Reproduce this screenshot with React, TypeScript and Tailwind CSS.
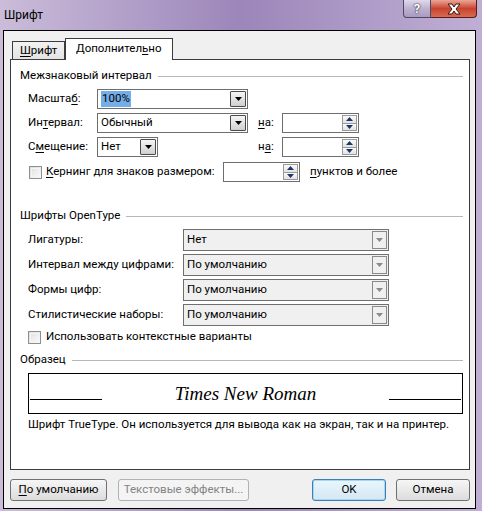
import React from "react";

// --- Small pieces ---

function U({ children }: { children: React.ReactNode }) {
  return <span className="underline underline-offset-[2px]">{children}</span>;
}

function DownArrow({ color = "#000" }: { color?: string }) {
  return (
    <svg width="7" height="4" viewBox="0 0 7 4">
      <polygon points="0,0 7,0 3.5,4" fill={color} />
    </svg>
  );
}

function UpArrow({ color = "#000" }: { color?: string }) {
  return (
    <svg width="7" height="4" viewBox="0 0 7 4">
      <polygon points="0,4 7,4 3.5,0" fill={color} />
    </svg>
  );
}

function EditCombo({
  className,
  children,
}: {
  className: string;
  children: React.ReactNode;
}) {
  return (
    <div className={`flex border border-[#6e6e6e] bg-white ${className}`}>
      <div className="flex flex-1 items-center pl-[3px]">{children}</div>
      <div className="m-px flex w-[16px] items-center justify-center rounded-[1px] border border-[#4a4a4a] bg-linear-to-b from-[#f6f6f6] to-[#cfcfcf]">
        <DownArrow />
      </div>
    </div>
  );
}

function Spin() {
  return (
    <div className="flex h-[20px] w-[77px] border border-[#6e6e6e] bg-white">
      <div className="flex-1" />
      <div className="m-px flex w-[15px] flex-col">
        <div className="flex flex-1 items-center justify-center border border-[#9a9a9a] bg-linear-to-b from-[#fbfbfb] to-[#e2e2e2]">
          <UpArrow color="#1d3566" />
        </div>
        <div className="flex flex-1 items-center justify-center border border-t-0 border-[#9a9a9a] bg-linear-to-b from-[#fbfbfb] to-[#e2e2e2]">
          <DownArrow color="#1d3566" />
        </div>
      </div>
    </div>
  );
}

function RoCombo({ children }: { children: React.ReactNode }) {
  return (
    <div className="flex h-[22px] w-[206px] border border-[#6f6f6f] bg-[#f0f0f0]">
      <div className="flex flex-1 items-center pl-[3px]">{children}</div>
      <div className="my-px mr-px flex w-[15px] items-center justify-center border border-[#8a8a8a] bg-[#f0f0f0]">
        <DownArrow color="#8a8a8a" />
      </div>
    </div>
  );
}

function CheckBox() {
  return (
    <div className="h-[13px] w-[13px] shrink-0 border border-[#8e8f8f] bg-linear-to-br from-[#dcdcdc] to-[#fafafa] p-px">
      <div className="h-full w-full border border-[#f4f4f4] bg-linear-to-br from-[#e4e4e4] to-[#f7f7f7]" />
    </div>
  );
}

function SectionHeader({ title }: { title: string }) {
  return (
    <div className="flex h-[16px] items-center">
      <span className="whitespace-nowrap">{title}</span>
      <div className="ml-[6px] h-px flex-1 bg-[#b4b8bd]" />
    </div>
  );
}

function Button({
  className,
  children,
}: {
  className: string;
  children: React.ReactNode;
}) {
  return (
    <div
      className={`flex h-[22px] items-center justify-center whitespace-nowrap rounded-[3px] border ${className}`}
    >
      {children}
    </div>
  );
}

// --- Dialog ---

export default function App() {
  return (
    <div className="flex h-[511px] w-[482px] flex-col bg-linear-to-r from-[#cbbcd9] via-[#9c86ba] to-[#c0afd4] font-['Roboto',sans-serif] text-[11.5px] leading-none text-black">
      {/* Title bar */}
      <div className="flex h-[30px] justify-between">
        <div className="self-center pl-[4px] pb-[1px] text-[12px]">Шрифт</div>
        <div className="mr-[5px] flex h-[18px]">
          <div className="flex w-[28px] items-center justify-center rounded-bl-[4px] border border-t-0 border-[#4d4866] bg-linear-to-b from-[#e0daea] via-[#bdb2d0] to-[#a89bc2] text-[13px] font-bold text-white [text-shadow:0_0_2px_#2b2540,0_0_1px_#2b2540]">
            ?
          </div>
          <div className="flex w-[46px] items-center justify-center rounded-br-[4px] border border-t-0 border-l-0 border-[#5a1d16] bg-linear-to-b from-[#e9a597] via-[#c8432e] to-[#d86a52]">
            <svg width="16" height="12" viewBox="0 0 16 12">
              <path
                d="M2 1 L6 1 L8 4 L10 1 L14 1 L10 6 L14 11 L10 11 L8 8 L6 11 L2 11 L6 6 Z"
                fill="#fff"
                stroke="#3a1410"
                strokeWidth="1"
              />
            </svg>
          </div>
        </div>
      </div>

      {/* Client area */}
      <div className="ml-[3px] flex h-[479px] w-[473px] flex-col border border-black bg-[#f0f0f0] pl-[6px] pt-[7px]">
        {/* Tabs */}
        <div className="flex h-[21px] items-end pl-[2px]">
          <div className="flex h-[18px] w-[53px] items-center border border-b-0 border-[#3c3c3c] bg-linear-to-b from-[#f2f2f2] to-[#e3e3e3] pl-[7px]">
            <span>
              <U>Ш</U>рифт
            </span>
          </div>
          <div className="relative z-10 -mb-px flex h-[22px] w-[108px] items-center border border-b-0 border-[#3c3c3c] bg-white pl-[10px] pb-[1px]">
            <span>
              Дополнител<U>ь</U>но
            </span>
          </div>
        </div>

        {/* Panel */}
        <div className="flex h-[411px] w-[460px] flex-col whitespace-nowrap border border-[#3c3c3c] bg-white pl-[9px] pr-[6px] pt-[8px]">
          <SectionHeader title="Межзнаковый интервал" />

          <div className="mt-[5px] flex h-[20px] items-center pl-[8px]">
            <div className="w-[69px]">
              Масшта<U>б</U>:
            </div>
            <EditCombo className="h-[20px] w-[151px]">
              <span className="bg-[#74aee8] px-px py-[2px]">100%</span>
            </EditCombo>
          </div>

          <div className="mt-[4px] flex h-[20px] items-center pl-[8px]">
            <div className="w-[69px]">
              Ин<U>т</U>ервал:
            </div>
            <EditCombo className="h-[20px] w-[151px]">Обычный</EditCombo>
            <div className="ml-[10px] w-[24px]">
              <U>н</U>а:
            </div>
            <Spin />
          </div>

          <div className="mt-[4px] flex h-[20px] items-center pl-[8px]">
            <div className="w-[69px]">
              С<U>м</U>ещение:
            </div>
            <div className="w-[151px]">
              <EditCombo className="h-[20px] w-[61px]">Нет</EditCombo>
            </div>
            <div className="ml-[10px] w-[24px]">
              н<U>а</U>:
            </div>
            <Spin />
          </div>

          <div className="mt-[5px] flex h-[20px] items-center pl-[9px]">
            <div className="flex w-[194px] items-center">
              <CheckBox />
              <span className="ml-[4px]">
                <U>К</U>ернинг для знаков размером:
              </span>
            </div>
            <Spin />
            <span className="ml-[10px]">
              <U>п</U>унктов и более
            </span>
          </div>

          <div className="mt-[26px]">
            <SectionHeader title="Шрифты OpenType" />
          </div>

          <div className="mt-[5px] flex flex-col gap-[3px] pl-[8px]">
            <div className="flex items-center">
              <div className="w-[155px]">Лигатуры:</div>
              <RoCombo>Нет</RoCombo>
            </div>
            <div className="flex items-center">
              <div className="w-[155px]">Интервал между цифрами:</div>
              <RoCombo>По умолчанию</RoCombo>
            </div>
            <div className="flex items-center">
              <div className="w-[155px]">Формы цифр:</div>
              <RoCombo>По умолчанию</RoCombo>
            </div>
            <div className="flex items-center">
              <div className="w-[155px]">Стилистические наборы:</div>
              <RoCombo>По умолчанию</RoCombo>
            </div>
          </div>

          <div className="mt-[3px] flex h-[16px] items-center pl-[8px]">
            <CheckBox />
            <span className="ml-[5px]">Использовать контекстные варианты</span>
          </div>

          <div className="mt-[7px]">
            <SectionHeader title="Образец" />
          </div>

          <div className="ml-[8px] mt-[5px] flex h-[41px] w-[435px] border border-black">
            <div className="mb-[13px] ml-px h-px w-[72px] self-end bg-black" />
            <div className="flex flex-1 items-center justify-center font-['Liberation_Serif',serif] text-[19px] italic">
              Times New Roman
            </div>
            <div className="mb-[13px] mr-px h-px w-[72px] self-end bg-black" />
          </div>

          <div className="ml-[8px] mt-[5px]">
            Шрифт TrueType. Он используется для вывода как на экран, так и на
            принтер.
          </div>
        </div>

        {/* Buttons */}
        <div className="mt-[9px] flex pr-[5px]">
          <Button className="w-[97px] border-[#707070] bg-linear-to-b from-[#f6f6f6] to-[#dcdcdc]">
            <span>
              <U>П</U>о умолчанию
            </span>
          </Button>
          <Button className="ml-[11px] w-[131px] border-[#adb2b5] bg-[#f4f4f4] text-[#838383]">
            Текстовые эффекты...
          </Button>
          <Button className="ml-auto w-[74px] border-[#3c7fb1] bg-linear-to-b from-[#eaf6fd] to-[#d4e7f4] shadow-[inset_0_0_0_1px_#a6d7f5]">
            OK
          </Button>
          <Button className="ml-[10px] w-[74px] border-[#707070] bg-linear-to-b from-[#f6f6f6] to-[#dcdcdc]">
            Отмена
          </Button>
        </div>
      </div>
    </div>
  );
}
